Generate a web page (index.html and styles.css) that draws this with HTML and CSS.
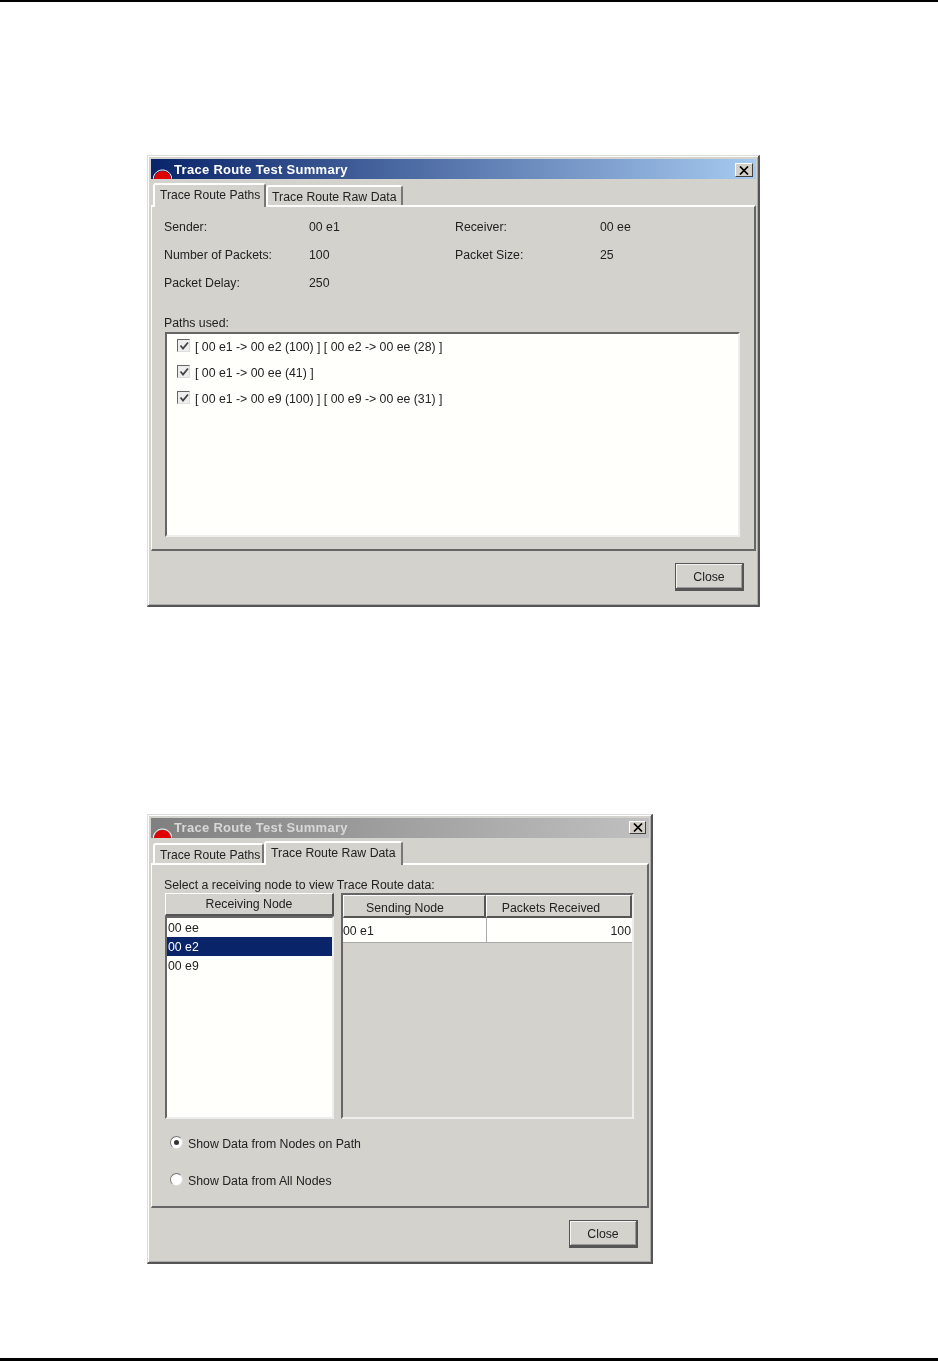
FILE: index.html
```html
<!DOCTYPE html>
<html lang="en">

<head>
    <meta charset="UTF-8">
    <meta name="viewport" content="width=device-width, initial-scale=1.0">
    <title>Trace Route Test Summary</title>
    <link rel="stylesheet" href="styles.css">
</head>

<body>
    <div class="page">

        <div class="dialog dialog-paths">
            <div class="titlebar">
                <svg class="app-icon" width="19" height="11" viewBox="0 0 19 11"><path d="M1 11 C2 6 5 3 9.500 3 C14 3 17 6 18 11 Z" fill="#e00000"/><path d="M0 11 C1 5 5 2 9.500 2 C14 2 18 5 19 11" fill="none" stroke="#ffffff" stroke-width="1"/></svg>
                <span class="title">Trace Route Test Summary</span>
                <span class="close-x"><svg width="10" height="9" viewBox="0 0 10 9"><path d="M1 0.500 L9 8.500 M9 0.500 L1 8.500" stroke="#000" stroke-width="1.700"/></svg></span>
            </div>
            <div class="tabs">
                <div class="tab tab-active tab-paths">Trace Route Paths</div>
                <div class="tab tab-idle">Trace Route Raw Data</div>
            </div>
            <div class="panel panel-paths">
                <div class="info-grid">
                    <span>Sender:</span><span>00 e1</span><span>Receiver:</span><span>00 ee</span>
                    <span>Number of Packets:</span><span>100</span><span>Packet Size:</span><span>25</span>
                    <span>Packet Delay:</span><span>250</span>
                </div>
                <div class="paths-label">Paths used:</div>
                <div class="paths-box">
                    <div class="path-row"><span class="check"><svg width="10" height="10" viewBox="0 0 10 10"><path d="M1.500 4.500 L4 7.500 L9 1.500" fill="none" stroke="#444" stroke-width="1.800"/></svg></span>[ 00 e1 -&gt; 00 e2 (100) ] [ 00 e2 -&gt; 00 ee (28) ]</div>
                    <div class="path-row"><span class="check"><svg width="10" height="10" viewBox="0 0 10 10"><path d="M1.500 4.500 L4 7.500 L9 1.500" fill="none" stroke="#444" stroke-width="1.800"/></svg></span>[ 00 e1 -&gt; 00 ee (41) ]</div>
                    <div class="path-row"><span class="check"><svg width="10" height="10" viewBox="0 0 10 10"><path d="M1.500 4.500 L4 7.500 L9 1.500" fill="none" stroke="#444" stroke-width="1.800"/></svg></span>[ 00 e1 -&gt; 00 e9 (100) ] [ 00 e9 -&gt; 00 ee (31) ]</div>
                </div>
            </div>
            <div class="footer"><div class="btn">Close</div></div>
        </div>

        <div class="dialog dialog-raw">
            <div class="titlebar titlebar-off">
                <svg class="app-icon" width="19" height="11" viewBox="0 0 19 11"><path d="M1 11 C2 6 5 3 9.500 3 C14 3 17 6 18 11 Z" fill="#e00000"/><path d="M0 11 C1 5 5 2 9.500 2 C14 2 18 5 19 11" fill="none" stroke="#ffffff" stroke-width="1"/></svg>
                <span class="title">Trace Route Test Summary</span>
                <span class="close-x"><svg width="10" height="9" viewBox="0 0 10 9"><path d="M1 0.500 L9 8.500 M9 0.500 L1 8.500" stroke="#000" stroke-width="1.700"/></svg></span>
            </div>
            <div class="tabs">
                <div class="tab tab-idle tab-left tab-paths">Trace Route Paths</div>
                <div class="tab tab-active tab-right">Trace Route Raw Data</div>
            </div>
            <div class="panel panel-raw">
                <div class="select-label">Select a receiving node to view Trace Route data:</div>
                <div class="tables">
                    <div class="node-col">
                        <div class="th th-node">Receiving Node</div>
                        <div class="node-list">
                            <div class="node-item">00 ee</div>
                            <div class="node-item node-selected">00 e2</div>
                            <div class="node-item">00 e9</div>
                        </div>
                    </div>
                    <div class="data-col">
                        <div class="th-row">
                            <div class="th th-send">Sending Node</div>
                            <div class="th th-recv">Packets Received</div>
                        </div>
                        <div class="data-row">
                            <div class="td td-send">00 e1</div>
                            <div class="td td-recv">100</div>
                        </div>
                    </div>
                </div>
                <div class="radio-row radio-first"><span class="radio radio-on"></span>Show Data from Nodes on Path</div>
                <div class="radio-row radio-second"><span class="radio"></span>Show Data from All Nodes</div>
            </div>
            <div class="footer"><div class="btn">Close</div></div>
        </div>

    </div>
</body>

</html>
```
FILE: styles.css
```css
* {
    box-sizing: border-box;
}

html,
body {
    margin: 0;
    padding: 0;
}

body {
    background-color: #ffffff;
    font-family: 'Liberation Sans', Arial, sans-serif;
    font-size: 12.3px;
    color: #222;
}

.page {
    height: 1361px;
    border-top: 2px solid #000;
    border-bottom: 3px solid #000;
    padding: 153px 0 0 147px;
    overflow: hidden;
}

/* window frame */
.dialog {
    background-color: #d4d2cd;
    border: 1px solid #ddd;
    border-right: 2px solid #555;
    border-bottom: 2px solid #555;
    padding: 3px 2px 0 3px;
    box-shadow: inset 1px 1px 0 #fff, inset -1px -1px 0 #aaa;
    filter: blur(0.3px);
}

.dialog-paths {
    width: 613px;
    height: 452px;
}

.dialog-raw {
    width: 506px;
    height: 450px;
    margin-top: 207px;
}

.titlebar {
    height: 20px;
    display: flex;
    align-items: center;
    position: relative;
    padding-left: 23px;
    background: linear-gradient(to right, #0a246a, #a6caf0);
    color: #fff;
    font-size: 13px;
    font-weight: bold;
    letter-spacing: 0.3px;
}

.titlebar-off {
    background: linear-gradient(to right, #808080, #c0c0c0);
    color: #d8d8d8;
    padding-bottom: 2px;
}

.app-icon {
    position: absolute;
    left: 2px;
    bottom: 0;
}

.close-x {
    margin-left: auto;
    margin-right: 3px;
    margin-top: 2px;
    width: 18px;
    height: 14px;
    display: flex;
    align-items: center;
    justify-content: center;
    background-color: #d4d0c8;
    border: 1px solid;
    border-color: #fff #404040 #404040 #fff;
}

.titlebar-off .close-x {
    width: 17px;
    height: 13px;
    margin-top: 0;
}

.tabs {
    height: 26px;
    display: flex;
    align-items: flex-end;
    padding-left: 2px;
}

.dialog-raw .tabs {
    height: 25px;
}

.tab {
    border-top: 2px solid #fff;
    border-left: 2px solid #fff;
    border-right: 2px solid #777;
    border-radius: 3px 3px 0 0;
    white-space: nowrap;
    padding-top: 3px;
}

.tab-paths {
    font-size: 12.1px;
}

.tab-active {
    height: 24px;
    width: 113px;
    padding-left: 5px;
    position: relative;
    z-index: 1;
    margin-bottom: -2px;
    background-color: #d4d2cd;
}

.tab-idle {
    height: 20px;
    width: 137px;
    padding-left: 4px;
}

.tab-left {
    width: 111px;
    padding-left: 5px;
}

.tab-right {
    width: 139px;
    padding-left: 5px;
}

.panel {
    border: 1px solid #fff;
    border-top: 2px solid #fff;
    border-right: 2px solid #666;
    border-bottom: 2px solid #666;
}

.panel-paths {
    height: 346px;
    padding: 13px 12px 0 12px;
}

.panel-raw {
    height: 345px;
    padding: 13px 12px 0 12px;
}

.info-grid {
    display: grid;
    grid-template-columns: 145px 146px 145px 100px;
    grid-auto-rows: 28px;
    line-height: 14px;
}

.paths-label {
    margin-top: 12px;
    height: 14px;
    line-height: 14px;
}

.paths-box {
    height: 205px;
    width: 575px;
    margin: 2px 0 0 1px;
    background-color: #fffffb;
    border: 2px solid;
    border-color: #666 #eee #eee #666;
}

.path-row {
    height: 26px;
    display: flex;
    align-items: center;
    padding-left: 10px;
}

.check {
    width: 13px;
    height: 13px;
    margin-right: 5px;
    margin-top: -3px;
    display: flex;
    align-items: center;
    justify-content: center;
    background-color: #eeeeee;
    border: 1px solid;
    border-color: #666 #ddd #ddd #666;
}

.select-label {
    height: 14px;
    line-height: 14px;
}

.tables {
    display: flex;
    gap: 7px;
    margin: 1px 0 0 1px;
}

.node-col {
    width: 169px;
}

.th {
    height: 23px;
    text-align: center;
    line-height: 24px;
    background-color: #d4d2cd;
    border: 1px solid;
    border-color: #fff #555 #555 #fff;
    border-bottom-width: 2px;
    border-right-width: 2px;
}

.th-node {
    line-height: 21px;
}

.node-list {
    height: 203px;
    background-color: #fffffb;
    border: 2px solid;
    border-color: #666 #eee #eee #666;
}

.node-item {
    height: 19px;
    line-height: 21px;
    padding-left: 1px;
}

.node-selected {
    background-color: #0a246a;
    color: #fff;
}

.data-col {
    width: 293px;
    height: 226px;
    border: 2px solid;
    border-color: #666 #eee #eee #666;
}

.th-row {
    display: flex;
}

.th-send {
    width: 143px;
    padding-right: 18px;
}

.th-recv {
    width: 146px;
    padding-right: 15px;
}

.data-row {
    display: flex;
    height: 25px;
    width: 289px;
    background-color: #fffffb;
    border-bottom: 1px solid #aaa;
}

.td {
    line-height: 26px;
    padding: 0 1px 0 0;
}

.td-send {
    width: 144px;
    border-right: 1px solid #aaa;
}

.td-recv {
    width: 145px;
    text-align: right;
}

.radio-row {
    display: flex;
    align-items: center;
    height: 16px;
    line-height: 18px;
    padding-left: 6px;
}

.radio-first {
    margin-top: 17px;
}

.radio-second {
    margin-top: 21px;
}

.radio {
    width: 13px;
    height: 13px;
    margin-right: 5px;
    margin-top: -3px;
    border-radius: 50%;
    background-color: #fff;
    border: 1px solid;
    border-color: #777 #ddd #ddd #777;
    display: flex;
    align-items: center;
    justify-content: center;
}

.radio-on::after {
    content: "";
    width: 5px;
    height: 5px;
    border-radius: 50%;
    background-color: #333;
}

.footer {
    display: flex;
    justify-content: flex-end;
    padding: 12px 12px 0 0;
}

.dialog-raw .footer {
    padding-right: 11px;
}

.btn {
    width: 69px;
    height: 28px;
    text-align: center;
    line-height: 27px;
    background-color: #d4d2cd;
    border: 1px solid #555;
    border-right-width: 2px;
    border-bottom-width: 3px;
    box-shadow: inset 1px 1px 0 #f4f4f4, inset -1px -1px 0 #999;
}
```
